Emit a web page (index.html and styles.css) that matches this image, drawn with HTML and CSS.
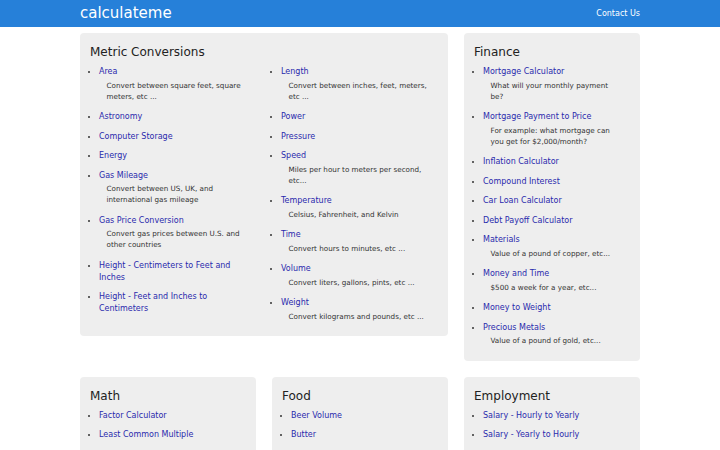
FILE: index.html
```html
<!DOCTYPE html>
<html lang="en">
<head>
    <meta charset="UTF-8">
    <meta name="viewport" content="width=device-width, initial-scale=1.0">
    <title>calculateme</title>
    <link rel="stylesheet" href="styles.css">
</head>
<body>
    <header class="topbar">
        <div class="topbar-inner">
            <a class="brand" href="#">calculateme</a>
            <a class="contact" href="#">Contact Us</a>
        </div>
    </header>

    <main class="grid">
        <section class="panel wide">
            <h2>Metric Conversions</h2>
            <div class="two-col">
                <ul>
                    <li><a href="#">Area</a><p>Convert between square feet, square meters, etc ...</p></li>
                    <li><a href="#">Astronomy</a></li>
                    <li><a href="#">Computer Storage</a></li>
                    <li><a href="#">Energy</a></li>
                    <li><a href="#">Gas Mileage</a><p>Convert between US, UK, and international gas mileage</p></li>
                    <li><a href="#">Gas Price Conversion</a><p>Convert gas prices between U.S. and other countries</p></li>
                    <li><a href="#">Height - Centimeters to Feet and Inches</a></li>
                    <li><a href="#">Height - Feet and Inches to Centimeters</a></li>
                </ul>
                <ul>
                    <li><a href="#">Length</a><p>Convert between inches, feet, meters, etc ...</p></li>
                    <li><a href="#">Power</a></li>
                    <li><a href="#">Pressure</a></li>
                    <li><a href="#">Speed</a><p>Miles per hour to meters per second, etc...</p></li>
                    <li><a href="#">Temperature</a><p>Celsius, Fahrenheit, and Kelvin</p></li>
                    <li><a href="#">Time</a><p>Convert hours to minutes, etc ...</p></li>
                    <li><a href="#">Volume</a><p>Convert liters, gallons, pints, etc ...</p></li>
                    <li><a href="#">Weight</a><p>Convert kilograms and pounds, etc ...</p></li>
                </ul>
            </div>
        </section>

        <section class="panel">
            <h2>Finance</h2>
            <ul>
                <li><a href="#">Mortgage Calculator</a><p>What will your monthly payment be?</p></li>
                <li><a href="#">Mortgage Payment to Price</a><p>For example: what mortgage can you get for $2,000/month?</p></li>
                <li><a href="#">Inflation Calculator</a></li>
                <li><a href="#">Compound Interest</a></li>
                <li><a href="#">Car Loan Calculator</a></li>
                <li><a href="#">Debt Payoff Calculator</a></li>
                <li><a href="#">Materials</a><p>Value of a pound of copper, etc...</p></li>
                <li><a href="#">Money and Time</a><p>$500 a week for a year, etc...</p></li>
                <li><a href="#">Money to Weight</a></li>
                <li><a href="#">Precious Metals</a><p>Value of a pound of gold, etc...</p></li>
            </ul>
        </section>

        <section class="panel">
            <h2>Math</h2>
            <ul>
                <li><a href="#">Factor Calculator</a></li>
                <li><a href="#">Least Common Multiple</a></li>
            </ul>
        </section>

        <section class="panel">
            <h2>Food</h2>
            <ul>
                <li><a href="#">Beer Volume</a></li>
                <li><a href="#">Butter</a></li>
            </ul>
        </section>

        <section class="panel">
            <h2>Employment</h2>
            <ul>
                <li><a href="#">Salary - Hourly to Yearly</a></li>
                <li><a href="#">Salary - Yearly to Hourly</a></li>
            </ul>
        </section>
    </main>
</body>
</html>
```

FILE: styles.css
```css
body {
    font-family: 'DejaVu Sans', Verdana, sans-serif;
    margin: 0;
    background: #fff;
    color: #333;
}
a {
    text-decoration: none;
}
.topbar {
    background-color: #2680d9;
    height: 27px;
}
.topbar-inner {
    width: 560px;
    margin: 0 auto;
    height: 100%;
    display: flex;
    align-items: center;
    justify-content: space-between;
}
.brand {
    color: #fff;
    font-size: 15px;
    line-height: 15px;
    margin-top: -1px;
}
.contact {
    color: #fff;
    font-size: 8px;
}
.grid {
    width: 560px;
    margin: 6px auto 0;
    display: grid;
    grid-template-columns: repeat(3, 176px);
    gap: 16px;
    align-items: start;
}
.wide {
    grid-column: span 2;
}
.panel {
    background-color: #eee;
    border-radius: 4px;
    padding: 12px 10px 5px;
}
.panel h2 {
    margin: 0 0 7px;
    font-size: 12px;
    line-height: 14px;
    font-weight: normal;
    color: #222;
}
.two-col {
    display: grid;
    grid-template-columns: 1fr 1fr;
    column-gap: 16px;
}
.panel ul {
    margin: 0;
    padding-left: 9px;
}
.panel li {
    font-size: 8px;
    line-height: 12px;
    padding-bottom: 7.5px;
}
.panel li a {
    color: #2a2aad;
}
/* short blurb under a link */
.panel li p {
    margin: 0 0 0 7.5px;
    padding: 1.5px 10px 2px 0;
    font-size: 7.2px;
    line-height: 11px;
    color: #333;
}
```
